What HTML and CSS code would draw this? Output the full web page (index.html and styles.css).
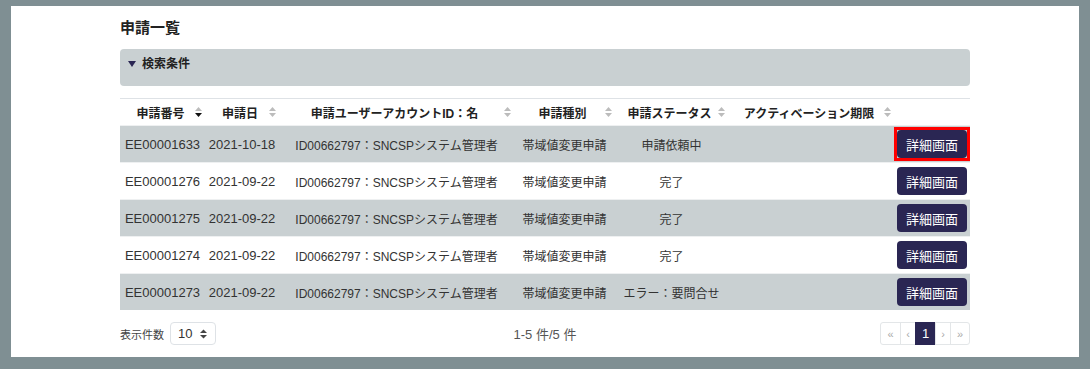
FILE: index.html
```html
<!DOCTYPE html>
<html lang="ja">
<head>
    <meta charset="UTF-8">
    <meta name="viewport" content="width=device-width, initial-scale=1.0">
    <title>申請一覧</title>
    <link rel="stylesheet" href="styles.css">
</head>
<body>
    <div class="page">
        <h1 class="title">申請一覧</h1>

        <div class="search-box">
            <div class="search-toggle">
                <svg class="caret" width="8" height="6" viewBox="0 0 8 6"><polygon points="0,0 8,0 4,6" /></svg>
                <span>検索条件</span>
            </div>
        </div>

        <table class="list">
            <colgroup>
                <col style="width: 85px">
                <col style="width: 74px">
                <col style="width: 235px">
                <col style="width: 101px">
                <col style="width: 113px">
                <col style="width: 166px">
                <col style="width: 76px">
            </colgroup>
            <thead>
                <tr>
                    <th><div class="th-inner"><span>申請番号</span><svg class="sort" width="7" height="12" viewBox="0 0 7 12"><polygon points="0,5 3.5,1 7,5" /><polygon class="on" points="0,7 3.5,11 7,7" /></svg></div></th>
                    <th><div class="th-inner"><span>申請日</span><svg class="sort" width="7" height="12" viewBox="0 0 7 12"><polygon points="0,5 3.5,1 7,5" /><polygon points="0,7 3.5,11 7,7" /></svg></div></th>
                    <th><div class="th-inner"><span>申請ユーザーアカウントID：名</span><svg class="sort" width="7" height="12" viewBox="0 0 7 12"><polygon points="0,5 3.5,1 7,5" /><polygon points="0,7 3.5,11 7,7" /></svg></div></th>
                    <th><div class="th-inner"><span>申請種別</span><svg class="sort" width="7" height="12" viewBox="0 0 7 12"><polygon points="0,5 3.5,1 7,5" /><polygon points="0,7 3.5,11 7,7" /></svg></div></th>
                    <th><div class="th-inner"><span>申請ステータス</span><svg class="sort" width="7" height="12" viewBox="0 0 7 12"><polygon points="0,5 3.5,1 7,5" /><polygon points="0,7 3.5,11 7,7" /></svg></div></th>
                    <th><div class="th-inner"><span>アクティベーション期限</span><svg class="sort" width="7" height="12" viewBox="0 0 7 12"><polygon points="0,5 3.5,1 7,5" /><polygon points="0,7 3.5,11 7,7" /></svg></div></th>
                    <th></th>
                </tr>
            </thead>
            <tbody>
                <tr class="odd">
                    <td>EE00001633</td>
                    <td>2021-10-18</td>
                    <td class="jp">ID00662797：SNCSPシステム管理者</td>
                    <td class="jp">帯域値変更申請</td>
                    <td class="jp">申請依頼中</td>
                    <td></td>
                    <td><span class="highlight"><button class="btn-detail">詳細画面</button></span></td>
                </tr>
                <tr>
                    <td>EE00001276</td>
                    <td>2021-09-22</td>
                    <td class="jp">ID00662797：SNCSPシステム管理者</td>
                    <td class="jp">帯域値変更申請</td>
                    <td class="jp">完了</td>
                    <td></td>
                    <td><button class="btn-detail">詳細画面</button></td>
                </tr>
                <tr class="odd">
                    <td>EE00001275</td>
                    <td>2021-09-22</td>
                    <td class="jp">ID00662797：SNCSPシステム管理者</td>
                    <td class="jp">帯域値変更申請</td>
                    <td class="jp">完了</td>
                    <td></td>
                    <td><button class="btn-detail">詳細画面</button></td>
                </tr>
                <tr>
                    <td>EE00001274</td>
                    <td>2021-09-22</td>
                    <td class="jp">ID00662797：SNCSPシステム管理者</td>
                    <td class="jp">帯域値変更申請</td>
                    <td class="jp">完了</td>
                    <td></td>
                    <td><button class="btn-detail">詳細画面</button></td>
                </tr>
                <tr class="odd">
                    <td>EE00001273</td>
                    <td>2021-09-22</td>
                    <td class="jp">ID00662797：SNCSPシステム管理者</td>
                    <td class="jp">帯域値変更申請</td>
                    <td class="jp">エラー：要問合せ</td>
                    <td></td>
                    <td><button class="btn-detail">詳細画面</button></td>
                </tr>
            </tbody>
        </table>

        <div class="footer">
            <div class="page-size">
                <span class="page-size-label">表示件数</span>
                <div class="select">
                    <span>10</span>
                    <svg width="7" height="10" viewBox="0 0 7 10"><polygon points="0,4 3.5,0.5 7,4" /><polygon points="0,6 3.5,9.5 7,6" /></svg>
                </div>
            </div>
            <div class="count">1-5 件/5 件</div>
            <ul class="pager">
                <li class="w20">«</li>
                <li>‹</li>
                <li class="active w20">1</li>
                <li>›</li>
                <li class="w19">»</li>
            </ul>
        </div>
    </div>
</body>
</html>
```

FILE: styles.css
```css
body {
    margin: 0;
    background: #7f8f93;
    font-family: "Liberation Sans", "Noto Sans CJK JP", sans-serif;
    font-size: 13px;
    color: #333;
}

.page {
    margin: 6px 11px 0;
    height: 351px;
    box-sizing: border-box;
    padding: 11px 109px 12px;
    background: #fff;
}

.title {
    margin: 0;
    font-size: 15px;
    line-height: 22px;
    font-weight: bold;
    color: #222;
}

/* 検索条件 */
.search-box {
    margin-top: 10px;
    height: 37px;
    box-sizing: border-box;
    padding: 6px 8px 0;
    background: #c9d0d2;
    border-radius: 4px;
}
.search-toggle {
    display: flex;
    align-items: center;
    gap: 6px;
    font-size: 12px;
    font-weight: bold;
    color: #222;
    line-height: 18px;
}
.caret {
    fill: #2a2653;
}

/* 一覧テーブル */
.list {
    margin-top: 12px;
    width: 850px;
    table-layout: fixed;
    border-collapse: collapse;
}
.list th {
    height: 26px;
    padding: 0 3px 0 6px;
    border-top: 1px solid #dee2e6;
    font-size: 12px;
    font-weight: bold;
    color: #222;
}
.th-inner {
    display: flex;
    align-items: center;
}
.th-inner span {
    flex: 1;
    text-align: center;
    white-space: nowrap;
}
.sort {
    flex-shrink: 0;
    fill: #bcbcbc;
}
.sort .on {
    fill: #111;
}
.list td {
    height: 36px;
    padding: 0;
    border-top: 1px solid #eef0f1;
    text-align: center;
    white-space: nowrap;
    color: #333;
}
.list td.jp {
    font-size: 12px;
}
.list tr.odd td {
    background: #c9d0d2;
}

.btn-detail {
    width: 70px;
    height: 28px;
    padding: 0;
    border: none;
    border-radius: 4px;
    background: #2a2653;
    color: #fff;
    font-family: inherit;
    font-size: 13px;
    vertical-align: middle;
    cursor: pointer;
}
.highlight {
    display: inline-block;
    border: 3px solid #ff0000;
    line-height: 0;
    vertical-align: middle;
}

/* フッター */
.footer {
    display: grid;
    grid-template-columns: 1fr auto 1fr;
    align-items: center;
    margin-top: 12px;
}
.page-size {
    display: flex;
    align-items: center;
    gap: 6px;
}
.page-size-label {
    font-size: 11px;
    color: #444;
}
.select {
    display: flex;
    align-items: center;
    justify-content: space-between;
    width: 46px;
    height: 23px;
    box-sizing: border-box;
    padding: 0 8px 0 7px;
    border: 1px solid #dee2e6;
    border-radius: 4px;
    color: #333;
}
.select svg {
    fill: #444;
}
.count {
    text-align: center;
    color: #555;
}
.pager {
    justify-self: end;
    display: flex;
    margin: 0;
    padding: 0;
    list-style: none;
}
.pager li {
    width: 16px;
    height: 23px;
    box-sizing: border-box;
    display: flex;
    align-items: center;
    justify-content: center;
    border: 1px solid #e3e6e8;
    margin-left: -1px;
    font-size: 11px;
    color: #aaa;
}
.pager li:first-child {
    margin-left: 0;
    border-radius: 3px 0 0 3px;
}
.pager li:last-child {
    border-radius: 0 3px 3px 0;
}
.pager .w20 {
    width: 21px;
}
.pager .w19 {
    width: 20px;
}
.pager li.active {
    background: #2a2653;
    border-color: #2a2653;
    color: #fff;
    font-size: 13px;
}
```
